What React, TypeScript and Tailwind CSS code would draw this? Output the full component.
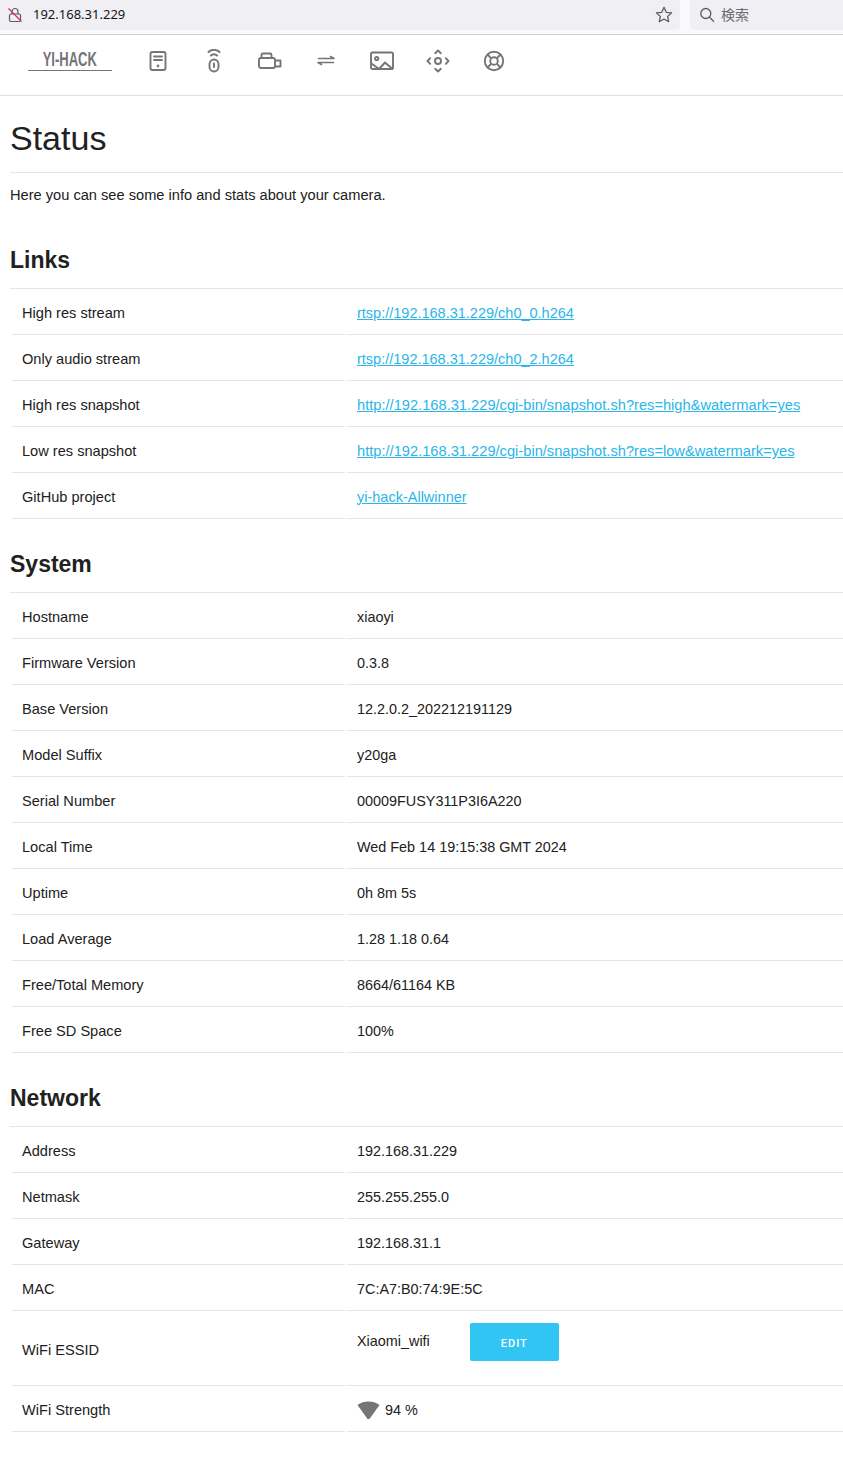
const links = [
  ['High res stream', 'rtsp://192.168.31.229/ch0_0.h264'],
  ['Only audio stream', 'rtsp://192.168.31.229/ch0_2.h264'],
  ['High res snapshot', 'http://192.168.31.229/cgi-bin/snapshot.sh?res=high&watermark=yes'],
  ['Low res snapshot', 'http://192.168.31.229/cgi-bin/snapshot.sh?res=low&watermark=yes'],
  ['GitHub project', 'yi-hack-Allwinner'],
];

const system = [
  ['Hostname', 'xiaoyi'],
  ['Firmware Version', '0.3.8'],
  ['Base Version', '12.2.0.2_202212191129'],
  ['Model Suffix', 'y20ga'],
  ['Serial Number', '00009FUSY311P3I6A220'],
  ['Local Time', 'Wed Feb 14 19:15:38 GMT 2024'],
  ['Uptime', '0h 8m 5s'],
  ['Load Average', '1.28 1.18 0.64'],
  ['Free/Total Memory', '8664/61164 KB'],
  ['Free SD Space', '100%'],
];

const network = [
  ['Address', '192.168.31.229'],
  ['Netmask', '255.255.255.0'],
  ['Gateway', '192.168.31.1'],
  ['MAC', '7C:A7:B0:74:9E:5C'],
];

const cellL = 'h-[44px] w-[333px] border-b border-[#e5e5e5] px-[10px] pt-[2px] align-middle text-[14.6px]';
const cellR = 'h-[44px] border-b border-[#e5e5e5] px-[10px] pt-[2px] align-middle';

function Icon({ children }: { children: React.ReactNode }) {
  return (
    <svg width="24" height="24" viewBox="0 0 24 24" fill="none" stroke="#757575" strokeWidth="1.9" strokeLinecap="round" strokeLinejoin="round" className="shrink-0">
      {children}
    </svg>
  );
}

function Nav() {
  return (
    <div className="flex h-[61px] items-start border-b border-[#e0e0e0] bg-white pt-[14px]">
      <div className="ml-[28px] flex h-[22px] w-[84px] items-start justify-center border-b border-[#757575]">
        <span className="inline-block origin-center scale-x-[0.62] text-[21px] leading-[20px] font-bold whitespace-nowrap text-[#757575]">YI-HACK</span>
      </div>
      <div className="ml-[34px] flex gap-[32px]">
        <Icon>
          <rect x="4.5" y="3" width="15" height="18" rx="2" />
          <path d="M8 7.5h8M8 11h8" />
          <circle cx="12" cy="17" r="0.5" fill="#757575" />
        </Icon>
        <Icon>
          <path d="M6.5 3a8 8 0 0 1 11 0M9 6.5a4.5 4.5 0 0 1 6 0" />
          <rect x="7.5" y="10.5" width="9" height="12" rx="4.5" />
          <path d="M12 14.5v3.5" />
        </Icon>
        <Icon>
          <rect x="1" y="9" width="16" height="10" rx="2" />
          <path d="M3.5 9V6a1.5 1.5 0 0 1 1.5-1.5h7A1.5 1.5 0 0 1 13.5 6v3" />
          <path d="M17.5 11.5h5v6h-5" />
        </Icon>
        <Icon>
          <g strokeWidth="1.6">
            <path d="M4.5 9.5H20L16.5 7.5M19.5 13.5H4L7.5 15.5" />
          </g>
        </Icon>
        <Icon>
          <rect x="1" y="3.5" width="22" height="16.5" rx="1.5" />
          <circle cx="6.7" cy="9.5" r="1.6" />
          <path d="M1.5 14.5L9 20L15 13.5L22.5 20" />
        </Icon>
        <Icon>
          <circle cx="12" cy="12" r="3" />
          <path d="M9.2 4.2L12 1.5L14.8 4.2M9.2 19.8L12 22.5L14.8 19.8M4.2 9.2L1.5 12L4.2 14.8M19.8 9.2L22.5 12L19.8 14.8" />
        </Icon>
        <Icon>
          <circle cx="12" cy="12" r="9.2" />
          <circle cx="12" cy="12" r="3.8" />
          <path d="M5.5 5.5l3.8 3.8M18.5 5.5l-3.8 3.8M5.5 18.5l3.8-3.8M18.5 18.5l-3.8-3.8" strokeLinecap="butt" />
        </Icon>
      </div>
    </div>
  );
}

function BrowserBar() {
  return (
    <div className="flex h-[35px] gap-[10px] border-b border-[#cfcfd2] bg-[#f9f9fb] pb-[4px] font-['Noto_Sans',sans-serif] text-[#15141a]">
      <div className="flex w-[680px] items-center rounded-br-[4px] bg-[#f0f0f4] pr-[7px] pl-[7px]">
        <svg width="16" height="16" viewBox="0 0 16 16" fill="none" className="shrink-0">
          <path d="M5 7V4.5a3 3 0 0 1 6 0V7" stroke="#5b5b66" strokeWidth="1.2" />
          <rect x="2.5" y="7" width="11" height="7.5" rx="1.5" stroke="#5b5b66" strokeWidth="1.2" />
          <path d="M1.5 1.5l13 13" stroke="#e22850" strokeWidth="1.3" />
        </svg>
        <span className="ml-[10px] flex-1 text-[13px]">192.168.31.229</span>
        <svg width="18" height="18" viewBox="0 0 16 16" fill="none" stroke="#5b5b66" strokeWidth="1.1" strokeLinejoin="round">
          <path d="M8 1.2l2 4.4 4.8.5-3.6 3.2 1 4.7L8 11.6l-4.2 2.4 1-4.7L1.2 6.1 6 5.6z" />
        </svg>
      </div>
      <div className="flex flex-1 items-center rounded-bl-[4px] bg-[#f0f0f4] pl-[9px]">
        <svg width="16" height="16" viewBox="0 0 16 16" fill="none" stroke="#5b5b66" strokeWidth="1.3">
          <circle cx="6.8" cy="6.5" r="5" />
          <path d="M10.5 10.2l4.5 4.5" />
        </svg>
        <span className="mt-[-2px] ml-[6px] font-['Noto_Sans_CJK_JP',sans-serif] text-[14px] leading-[18px] text-[#6b6b75]">検索</span>
      </div>
    </div>
  );
}

function Section({ title, children }: { title: string; children: React.ReactNode }) {
  return (
    <div className="w-[843px] overflow-hidden">
      <h2 className="ml-[10px] h-[43px] border-b border-[#e5e5e5] text-[23px] leading-[28px] font-bold text-[#212121]">{title}</h2>
      <table className="ml-[10px] w-[835px] table-fixed border-separate border-spacing-[2px] text-[14.4px] text-[#212121]">
        <tbody>{children}</tbody>
      </table>
    </div>
  );
}

export default function App() {
  return (
    <div className="h-[1457px] w-[843px] overflow-hidden bg-white font-['Liberation_Sans',Arial,sans-serif]">
      <BrowserBar />
      <Nav />
      <h1 className="ml-[10px] h-[77px] border-b border-[#e5e5e5] pt-[20px] text-[34px] leading-[44px] font-normal text-[#212121]">Status</h1>
      <p className="mt-[12px] ml-[10px] text-[14.63px] leading-[20px] text-[#212121]">Here you can see some info and stats about your camera.</p>

      <div className="mt-[41px]">
        <Section title="Links">
          {links.map(([k, v]) => (
            <tr key={k}>
              <td className={cellL}>{k}</td>
              <td className={cellR}>
                <a className={v.startsWith('http') ? 'text-[14.67px] text-[#29b6e8] underline' : 'text-[14.5px] text-[#29b6e8] underline'}>{v}</a>
              </td>
            </tr>
          ))}
        </Section>
      </div>

      <div className="mt-[29px]">
        <Section title="System">
          {system.map(([k, v]) => (
            <tr key={k}>
              <td className={cellL}>{k}</td>
              <td className={cellR}>{v}</td>
            </tr>
          ))}
        </Section>
      </div>

      <div className="mt-[29px]">
        <Section title="Network">
          {network.map(([k, v]) => (
            <tr key={k}>
              <td className={cellL}>{k}</td>
              <td className={cellR}>{v}</td>
            </tr>
          ))}
          <tr>
            <td className="h-[73px] w-[333px] border-b border-[#e5e5e5] px-[10px] pt-[4px] align-middle text-[14.6px]">WiFi ESSID</td>
            <td className="h-[73px] border-b border-[#e5e5e5] px-[10px] pt-[10px] pb-[24px] align-middle">
              <div className="flex items-center">
                <span>Xiaomi_wifi</span>
                <button className="ml-[40px] h-[38px] w-[89px] rounded-[2px] bg-[#31c5f3] pt-[4px] font-['Roboto',sans-serif] text-[11px] font-medium tracking-[1px] text-white">EDIT</button>
              </div>
            </td>
          </tr>
          <tr>
            <td className={cellL}>WiFi Strength</td>
            <td className={cellR}>
              <div className="flex items-center">
                <svg width="23" height="18" viewBox="0 0 23 18">
                  <path d="M0.5 4C3.5 1.6 7.5 .5 11.5 .5S19.5 1.6 22.5 4L12.5 18h-2z" fill="#757575" />
                </svg>
                <span className="ml-[5px]">94 %</span>
              </div>
            </td>
          </tr>
        </Section>
      </div>
    </div>
  );
}
